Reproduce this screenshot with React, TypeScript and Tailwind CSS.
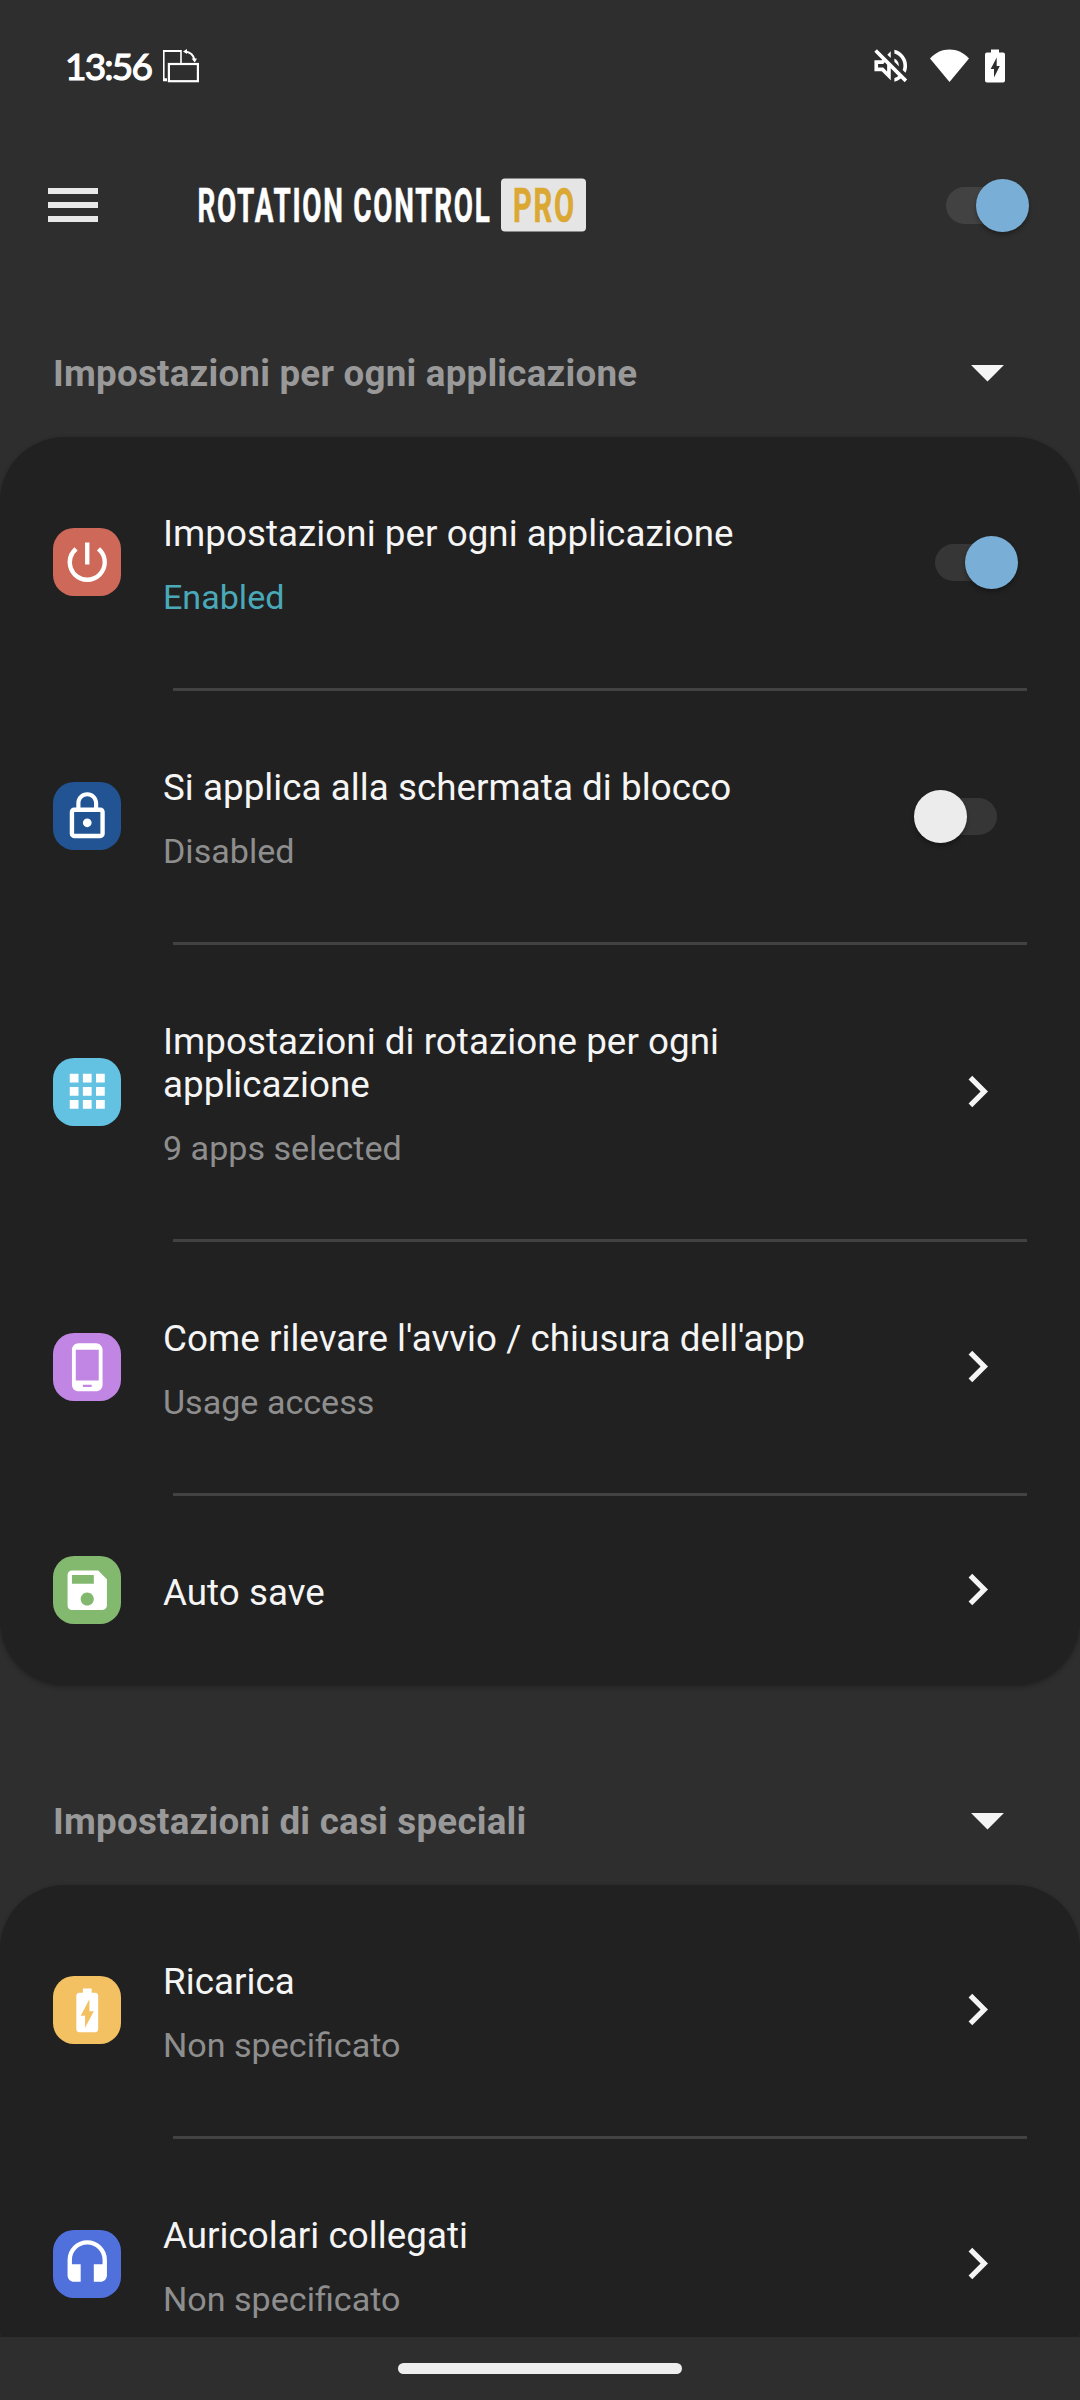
import type { ReactNode } from "react";
import type { IconType } from "react-icons";
import {
  MdApps,
  MdArrowDropDown,
  MdBatteryChargingFull,
  MdChevronRight,
  MdHeadset,
  MdLockOutline,
  MdOutlineVolumeOff,
  MdPhoneAndroid,
  MdPowerSettingsNew,
  MdSave,
} from "react-icons/md";

function RotateStatusIcon() {
  return (
    <svg width="36" height="34" viewBox="0 0 36 34" fill="none" stroke="#fff" className="ml-[11px]">
      <path d="M18 14V1.8H0.8V31.5H4" strokeWidth="1.6" />
      <path d="M1 2H18" strokeWidth="2" />
      <path d="M1 30.5H4" strokeWidth="2.5" />
      <rect x="5.9" y="15" width="29" height="17.2" strokeWidth="2.2" />
      <path d="M22 2.5C27 3 30.5 6 31.5 11" strokeWidth="2" />
      <path d="M20 2.5L24 0V5ZM31.8 13.4L28.6 9.5H34Z" fill="#fff" stroke="none" />
    </svg>
  );
}

function WifiIcon() {
  return (
    <svg width="39" height="34" viewBox="0 0 39 34" className="mb-px ml-[18px]">
      <path d="M19.5 33L0 9.6C5 3.6 12 0.4 19.5 0.4S34 3.6 39 9.6Z" fill="#fff" />
    </svg>
  );
}

function BatteryIcon() {
  return (
    <svg width="20" height="34" viewBox="0 0 20 34" className="ml-[16px]">
      <path
        fill="#fff"
        fillRule="evenodd"
        d="M6 0.5H14V3.5H18A2 2 0 0 1 20 5.5V31.5A2 2 0 0 1 18 33.5H2A2 2 0 0 1 0 31.5V5.5A2 2 0 0 1 2 3.5H6ZM11.7 8.5L5.7 20H9V28.5L14.8 17H11.7Z"
      />
    </svg>
  );
}

function StatusBar() {
  return (
    <div className="flex h-[132px] items-center pr-[75px] pl-[65px] text-white">
      <span className="mb-[2px] w-[87px] font-['Lato'] text-[37px] leading-none font-normal tracking-[-1.8px] whitespace-nowrap [-webkit-text-stroke:1.2px_#fff]">
        13:56
      </span>
      <RotateStatusIcon />
      <MdOutlineVolumeOff size={43.5} className="ml-auto" />
      <WifiIcon />
      <BatteryIcon />
    </div>
  );
}

function Switch({ on, header = false }: { on: boolean; header?: boolean }) {
  return (
    <div className={`relative h-[37px] w-[69px] shrink-0 rounded-full ${header ? "bg-[#424242]" : "bg-[#363636]"}`}>
      <div
        className={`absolute -top-[8px] size-[53px] rounded-full shadow-[0_3px_4px_rgba(0,0,0,0.3)] ${
          on ? "left-[30px] bg-[#79afd6]" : "-left-[14px] bg-[#ececec]"
        }`}
      />
    </div>
  );
}

function AppBar() {
  return (
    <header className="flex h-[146px] items-center pl-[48px]">
      <div className="flex w-[50px] flex-col gap-[8px]">
        <div className="h-[6px] bg-[#e8e8e8]" />
        <div className="h-[6px] bg-[#e8e8e8]" />
        <div className="h-[6px] bg-[#e8e8e8]" />
      </div>
      <svg
        width="391"
        height="54"
        viewBox="0 0 391 54"
        className="ml-[98px] overflow-visible font-['Roboto'] font-bold"
      >
        <text
          x="1.5"
          y="44"
          fontSize="48"
          letterSpacing="3"
          fill="#fff"
          stroke="#fff"
          strokeWidth="0.6"
          textLength="294"
          lengthAdjust="spacingAndGlyphs"
        >
          ROTATION CONTROL
        </text>
        <rect x="305" y="0.5" width="85" height="53" rx="4" fill="#e5e5e5" />
        <text
          x="317"
          y="44"
          fontSize="48"
          letterSpacing="3"
          fill="#dba833"
          stroke="#dba833"
          strokeWidth="0.6"
          textLength="63"
          lengthAdjust="spacingAndGlyphs"
        >
          PRO
        </text>
      </svg>
      <div className="mr-[65px] ml-auto">
        <Switch on header />
      </div>
    </header>
  );
}

function SectionHeader({ title, className }: { title: string; className: string }) {
  return (
    <div className={`flex items-center justify-between pr-[53px] pl-[53px] ${className}`}>
      <h2 className="pt-[2px] text-[36.75px] leading-[43px] font-bold tracking-[0.22px] text-[#999999]">{title}</h2>
      <MdArrowDropDown size={79} className="mb-[2px] text-[#f5f5f5]" />
    </div>
  );
}

interface RowProps {
  icon: IconType;
  tint: string;
  title: string;
  summary?: string;
  active?: boolean;
  control?: ReactNode;
  last?: boolean;
}

function Row({ icon: Icon, tint, title, summary, active, control, last }: RowProps) {
  return (
    <div>
      <div className="flex items-center pl-[53px]">
        <div className={`mb-[1px] flex size-[68px] shrink-0 items-center justify-center rounded-[21px] ${tint}`}>
          <Icon size={52.5} color="#fff" />
        </div>
        <div className="ml-[42px] w-[690px] pt-[75px] pb-[71px]">
          <div className="text-[36.75px] leading-[43px] tracking-[0.04px] text-[#f5f5f5]">{title}</div>
          {summary && (
            <div className={`mt-[22px] text-[34.1px] leading-[40px] ${active ? "text-[#4aa9b8]" : "text-[#8e8e8e]"}`}>
              {summary}
            </div>
          )}
        </div>
        {control ?? <MdChevronRight size={63} className="mb-[2px] ml-[93px] text-[#f5f5f5]" />}
      </div>
      {!last && <div className="mr-[53px] ml-[173px] h-[3px] bg-[#424242]" />}
    </div>
  );
}

function Card({ children }: { children: ReactNode }) {
  return (
    <section className="rounded-[65px] bg-[#212121] shadow-[0_2px_5px_rgba(0,0,0,0.3)]">{children}</section>
  );
}

export default function App() {
  return (
    <div className="flex h-[2400px] w-[1080px] flex-col overflow-hidden bg-[#2e2e2e] font-['Roboto',sans-serif]">
      <StatusBar />
      <AppBar />
      <main className="h-[2059px] overflow-hidden">
        <SectionHeader title="Impostazioni per ogni applicazione" className="h-[159px] pt-[30px]" />
        <Card>
          <Row
            icon={MdPowerSettingsNew}
            tint="bg-[#ce6858]"
            title="Impostazioni per ogni applicazione"
            summary="Enabled"
            active
            control={<div className="ml-[82px]"><Switch on /></div>}
          />
          <Row
            icon={MdLockOutline}
            tint="bg-[#225494]"
            title="Si applica alla schermata di blocco"
            summary="Disabled"
            control={<div className="ml-[75px]"><Switch on={false} /></div>}
          />
          <Row
            icon={MdApps}
            tint="bg-[#63c1e1]"
            title="Impostazioni di rotazione per ogni applicazione"
            summary="9 apps selected"
          />
          <Row
            icon={MdPhoneAndroid}
            tint="bg-[#c185e3]"
            title="Come rilevare l'avvio / chiusura dell'app"
            summary="Usage access"
          />
          <Row icon={MdSave} tint="bg-[#83b86f]" title="Auto save" last />
        </Card>
        <SectionHeader title="Impostazioni di casi speciali" className="h-[200px] pt-[70px]" />
        <Card>
          <Row icon={MdBatteryChargingFull} tint="bg-[#f3c162]" title="Ricarica" summary="Non specificato" />
          <Row icon={MdHeadset} tint="bg-[#5070dc]" title="Auricolari collegati" summary="Non specificato" last />
        </Card>
      </main>
      <nav className="flex h-[63px] justify-center pt-[26px]">
        <div className="h-[11px] w-[284px] rounded-full bg-[#eeeeee]" />
      </nav>
    </div>
  );
}
